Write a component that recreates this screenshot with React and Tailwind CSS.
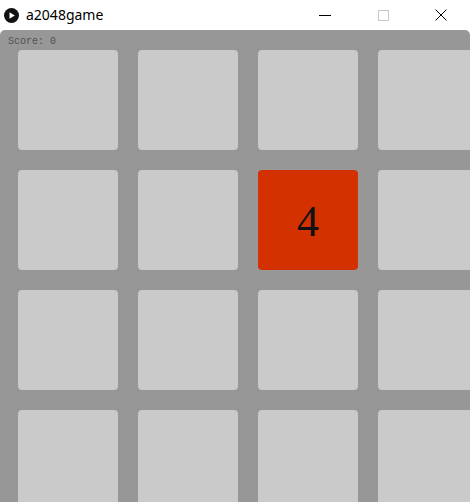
export default function App() {
  const cells = Array.from({ length: 16 }, (_, i) => i);
  return (
    <div className="w-[470px] h-[502px] overflow-hidden flex flex-col bg-white">
      <div className="h-[30px] shrink-0 flex items-center bg-white relative">
        <svg className="ml-[4px]" width="15" height="15" viewBox="0 0 15 15">
          <circle cx="7.5" cy="7.5" r="7.5" fill="#111" />
          <path d="M5.5 4.2 L10.8 7.5 L5.5 10.8 Z" fill="#fff" />
        </svg>
        <span className="ml-[7px] text-[14px] text-black leading-none" style={{ fontFamily: '"Segoe UI", "Noto Sans", sans-serif' }}>
          a2048game
        </span>
        <div className="absolute right-0 top-0 h-[30px] flex">
          <div className="w-[58px] h-[30px] flex items-center justify-center">
            <div className="w-[12px] h-[1px] bg-black" />
          </div>
          <div className="w-[58px] h-[30px] flex items-center justify-center">
            <div className="w-[11px] h-[11px] border border-[#c8c8c8]" />
          </div>
          <div className="w-[58px] h-[30px] flex items-center justify-center">
            <svg width="12" height="12" viewBox="0 0 12 12">
              <path d="M0.5 0.5 L11.5 11.5 M11.5 0.5 L0.5 11.5" stroke="#000" strokeWidth="1" />
            </svg>
          </div>
        </div>
      </div>
      <div className="flex-1 bg-[#979797] rounded-t-[5px] relative overflow-hidden">
        <div className="absolute left-[8px] top-[6px] text-[10px] leading-[12px] text-[#505050]" style={{ fontFamily: '"Liberation Mono", monospace' }}>
          Score: 0
        </div>
        <div className="grid grid-cols-[100px_100px_100px_100px] gap-[20px] pl-[18px] pt-[20px] w-max">
          {cells.map((i) => (
            <div
              key={i}
              className={
                i === 6
                  ? "w-[100px] h-[100px] rounded-[4px] bg-[#d43100] flex items-center justify-center"
                  : "w-[100px] h-[100px] rounded-[4px] bg-[#cacaca]"
              }
            >
              {i === 6 && (
                <span className="text-[44px] leading-none text-[#111] pt-[4px]" style={{ fontFamily: '"Liberation Serif", serif' }}>
                  4
                </span>
              )}
            </div>
          ))}
        </div>
      </div>
    </div>
  );
}
